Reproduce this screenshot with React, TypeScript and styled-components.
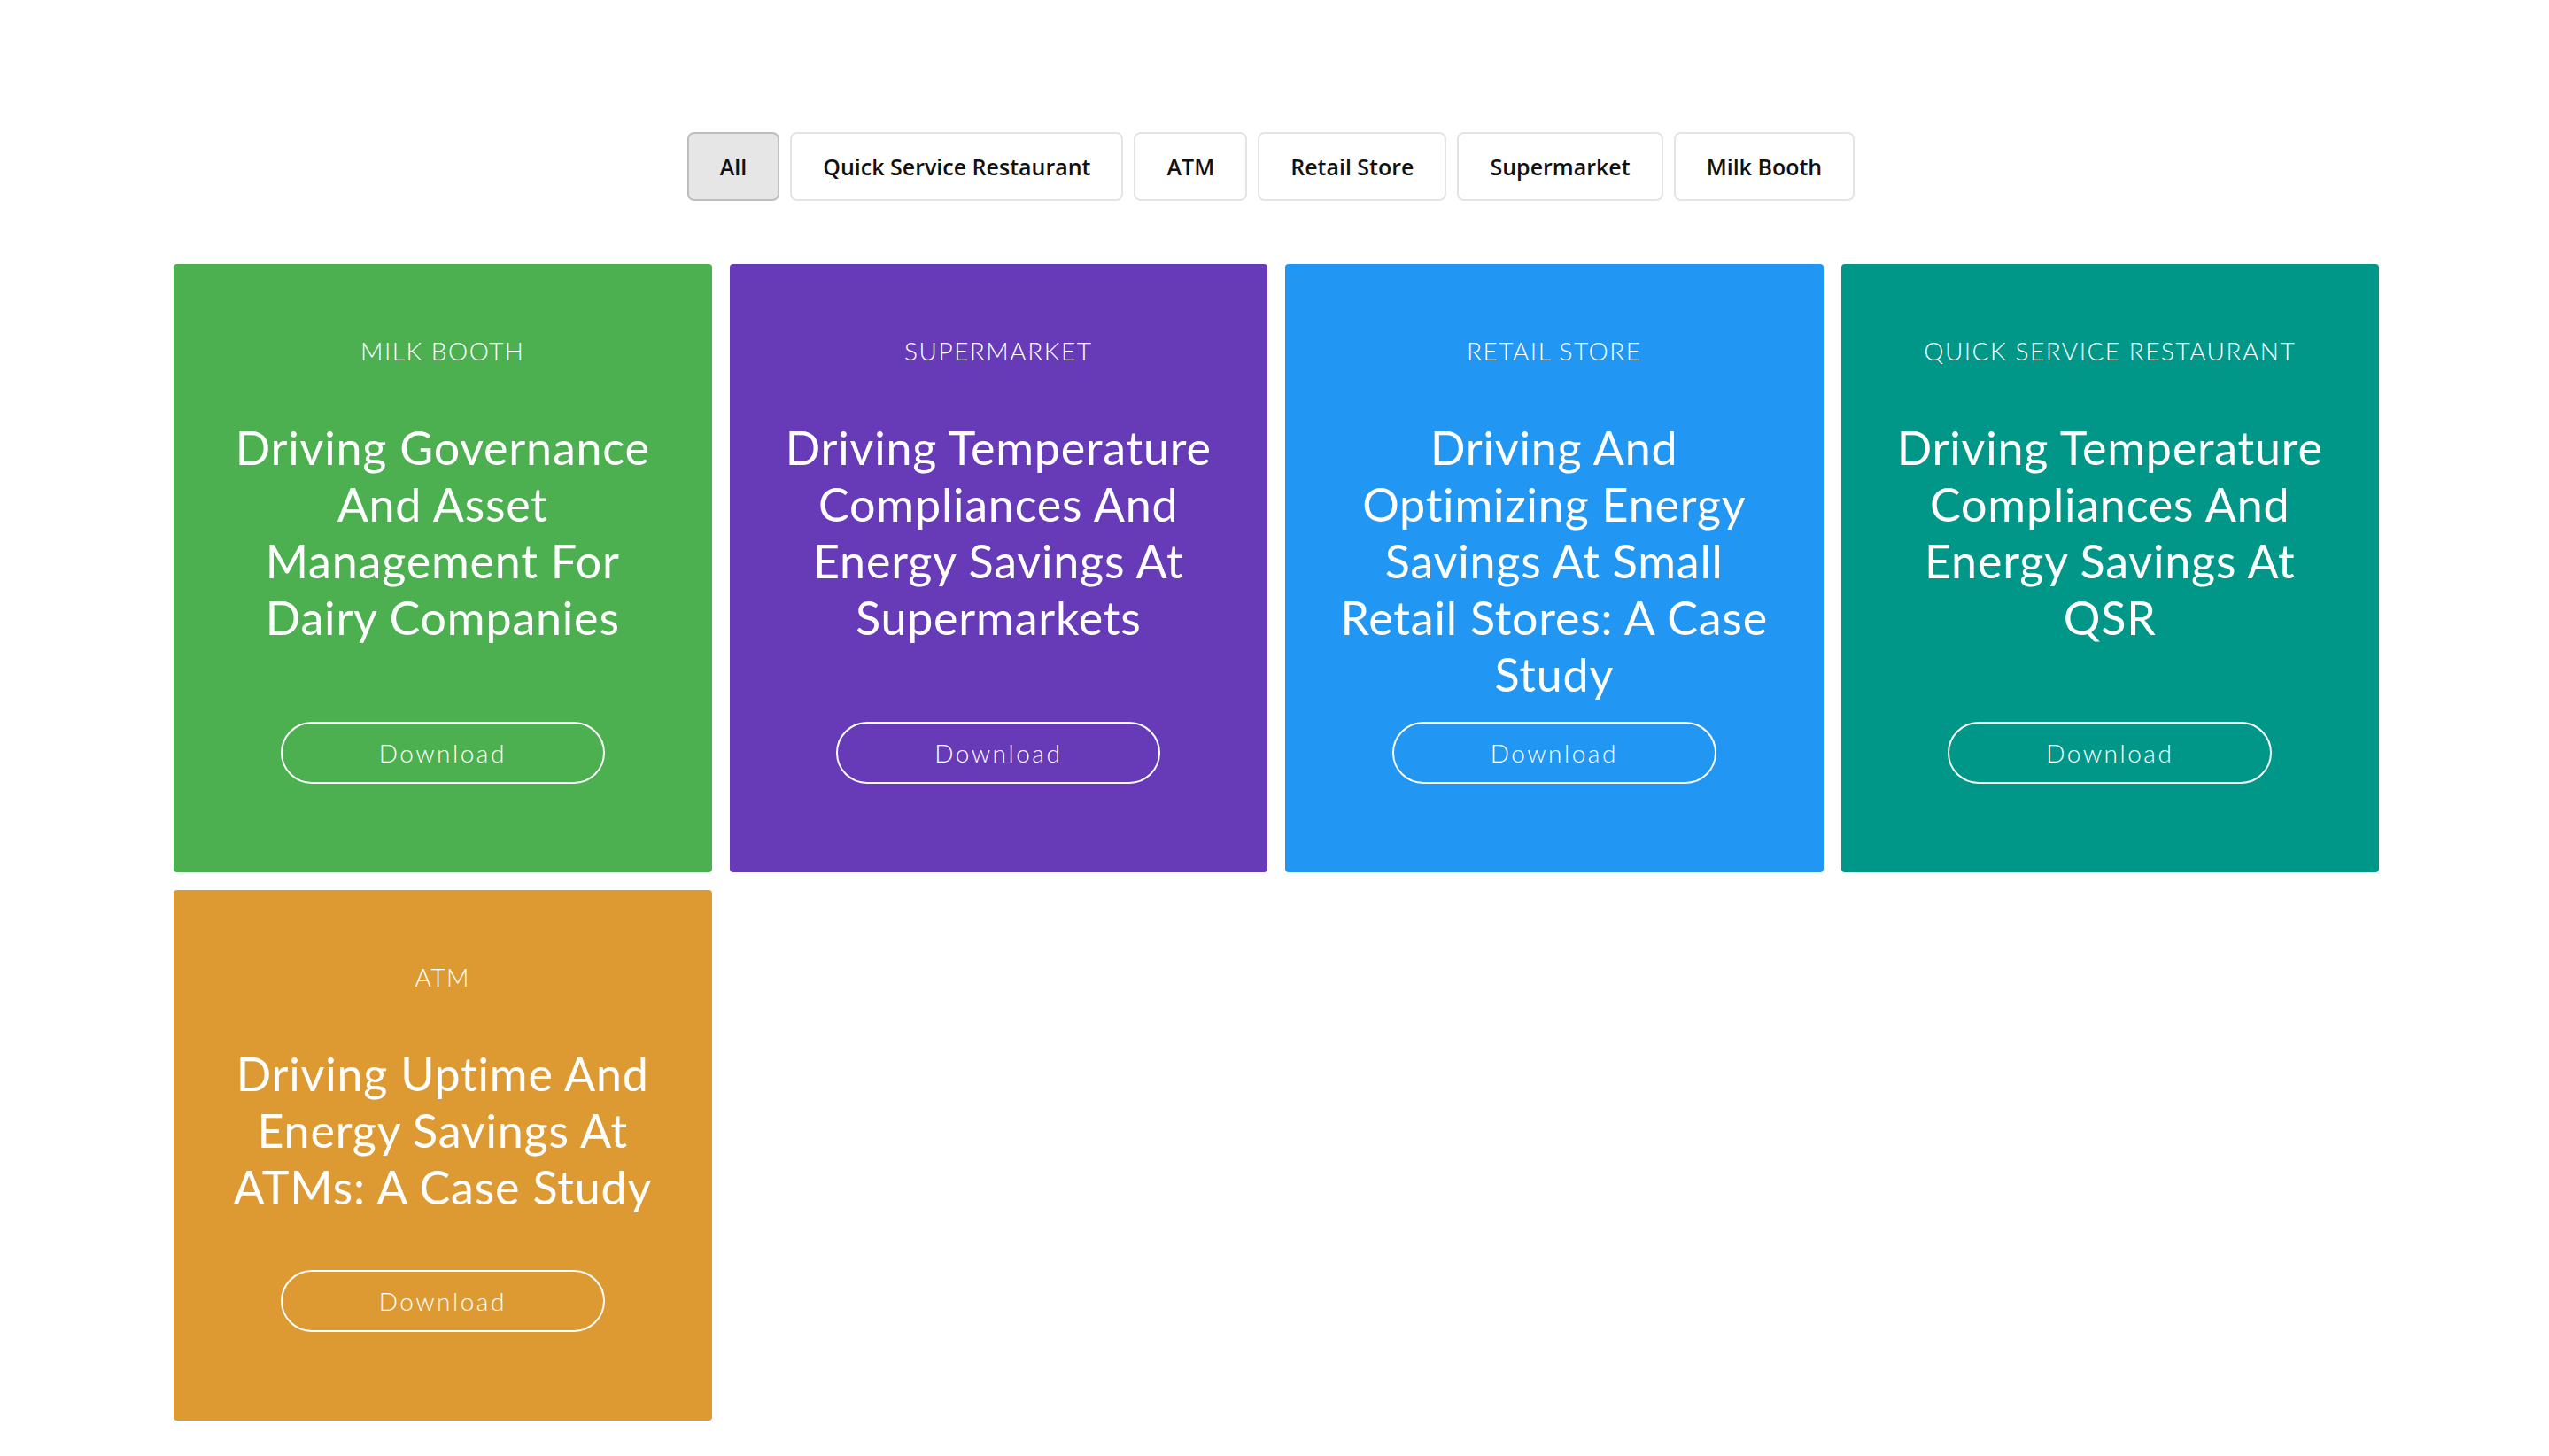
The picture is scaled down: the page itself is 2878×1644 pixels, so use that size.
import React, { useState } from "react";
import styled, { createGlobalStyle } from "styled-components";

const GlobalStyle = createGlobalStyle`
  html, body {
    margin: 0;
    padding: 0;
    background: #ffffff;
  }
  * { box-sizing: border-box; }
`;

const Page = styled.div`
  padding: 149px 192px 39px 196px;
  background: #ffffff;
`;

const FilterBar = styled.div`
  display: flex;
  justify-content: center;
  gap: 12px;
  padding-right: 12px;
`;

const FilterButton = styled.button<{ $active?: boolean }>`
  height: 78px;
  padding: 0 35px;
  border: 2px solid ${(p) => (p.$active ? "#bdbdbd" : "#e4e4e4")};
  background: ${(p) => (p.$active ? "#e6e6e6" : "#ffffff")};
  border-radius: 8px;
  font-family: "Open Sans", "Noto Sans", sans-serif;
  font-weight: 600;
  font-size: 25px;
  letter-spacing: 0;
  color: #111111;
  cursor: pointer;
`;

const Grid = styled.div`
  display: grid;
  grid-template-columns: repeat(4, 1fr);
  gap: 20px;
  margin-top: 71px;
`;

const Card = styled.div<{ $bg: string }>`
  display: flex;
  flex-direction: column;
  align-items: center;
  background: ${(p) => p.$bg};
  border-radius: 4px;
  padding: 77px 48px 100px;
  color: #ffffff;
  text-align: center;
  font-family: Lato, "Open Sans", sans-serif;
`;

const Category = styled.div`
  font-size: 28px;
  line-height: 42px;
  font-weight: 300;
  letter-spacing: 1.5px;
  text-transform: uppercase;
`;

const Title = styled.h3`
  margin: 56px 0 22px;
  flex-grow: 1;
  min-height: 232px;
  font-size: 52px;
  line-height: 64px;
  font-weight: 400;
  letter-spacing: 0.8px;
`;

const DownloadButton = styled.button`
  width: 366px;
  height: 70px;
  flex-shrink: 0;
  border: 2px solid #ffffff;
  border-radius: 35px;
  background: transparent;
  color: #ffffff;
  font-family: Lato, "Open Sans", sans-serif;
  font-size: 28px;
  font-weight: 300;
  letter-spacing: 2.5px;
  cursor: pointer;
`;

const filters = [
  "All",
  "Quick Service Restaurant",
  "ATM",
  "Retail Store",
  "Supermarket",
  "Milk Booth",
];

const cards = [
  {
    category: "Milk Booth",
    title: "Driving Governance And Asset Management For Dairy Companies",
    bg: "#4caf50",
  },
  {
    category: "Supermarket",
    title: "Driving Temperature Compliances And Energy Savings At Supermarkets",
    bg: "#673ab7",
  },
  {
    category: "Retail Store",
    title: "Driving And Optimizing Energy Savings At Small Retail Stores: A Case Study",
    bg: "#2196f3",
  },
  {
    category: "Quick Service Restaurant",
    title: "Driving Temperature Compliances And Energy Savings At QSR",
    bg: "#009688",
  },
  {
    category: "ATM",
    title: "Driving Uptime And Energy Savings At ATMs: A Case Study",
    bg: "#dd9a33",
  },
];

export default function App() {
  const [active, setActive] = useState("All");
  const shown =
    active === "All"
      ? cards
      : cards.filter((c) => c.category === active);
  return (
    <Page>
      <GlobalStyle />
      <FilterBar>
        {filters.map((f) => (
          <FilterButton
            key={f}
            $active={f === active}
            onClick={() => setActive(f)}
          >
            {f}
          </FilterButton>
        ))}
      </FilterBar>
      <Grid>
        {shown.map((c) => (
          <Card key={c.title} $bg={c.bg}>
            <Category>{c.category}</Category>
            <Title>{c.title}</Title>
            <DownloadButton>Download</DownloadButton>
          </Card>
        ))}
      </Grid>
    </Page>
  );
}
